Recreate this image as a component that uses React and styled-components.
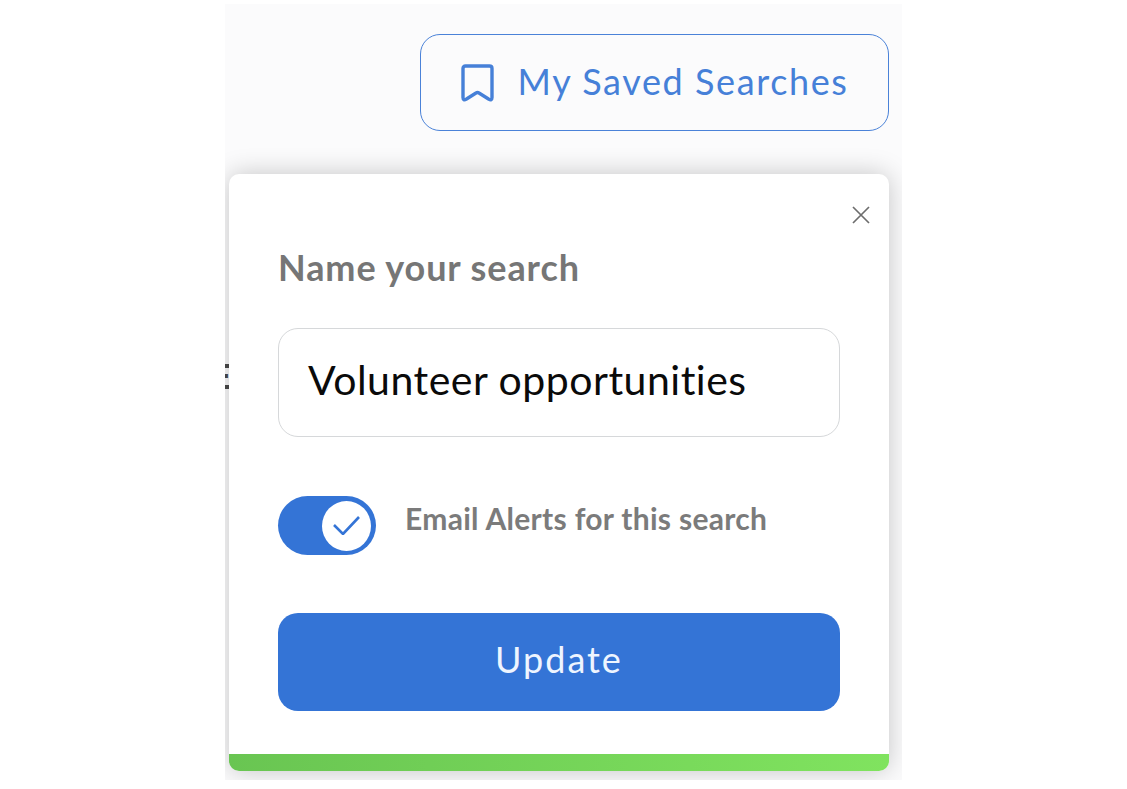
import styled, { createGlobalStyle } from "styled-components";

const GlobalStyle = createGlobalStyle`
  html, body {
    margin: 0;
    padding: 0;
    background: #ffffff;
  }
`;

const Page = styled.div`
  width: 1127px;
  height: 789px;
  overflow: hidden;
  font-family: "Lato", "Noto Sans", sans-serif;
  font-variant-ligatures: none;
`;

const Panel = styled.div`
  position: relative;
  display: flex;
  flex-direction: column;
  align-items: flex-end;
  box-sizing: border-box;
  width: 677px;
  height: 776px;
  margin: 4px 0 0 225px;
  padding: 30px 13px 0 4px;
  background: #fbfbfc;
  overflow: hidden;
`;

/* bit of the page behind the popup, cut off by the panel edge */
const BehindGlyph = styled.span`
  position: absolute;
  top: 355px;
  left: -13px;
  color: #4a4a4a;
  font-size: 34px;
  font-weight: 900;
  line-height: 1;
`;

const SavedButton = styled.button`
  display: flex;
  align-items: center;
  justify-content: center;
  gap: 24px;
  box-sizing: border-box;
  flex: none;
  width: 469px;
  height: 97px;
  border: 1.5px solid #4a82d8;
  border-radius: 20px;
  background: transparent;
  color: #4680d8;
  font-family: inherit;
  font-size: 36px;
  letter-spacing: 1.6px;
`;

const SavedLabel = styled.span`
  margin-bottom: 3px;
`;

const Card = styled.div`
  position: relative;
  display: flex;
  flex-direction: column;
  box-sizing: border-box;
  flex: none;
  width: 660px;
  height: 597px;
  margin-top: 43px;
  border-radius: 10px;
  background: #ffffff;
  box-shadow: 0 0 26px rgba(0, 0, 0, 0.22);
  overflow: hidden;
`;

const CardBody = styled.div`
  display: flex;
  flex-direction: column;
  flex: 1;
  padding: 0 49px;
`;

const CloseRow = styled.div`
  display: flex;
  justify-content: flex-end;
  height: 20px;
  margin: 31px -31px 0 0;
  color: #6d6d6d;
`;

const Title = styled.h2`
  margin: 19px 0 0;
  color: #767676;
  font-size: 36px;
  font-weight: 700;
  line-height: 46px;
  letter-spacing: 0.9px;
`;

const NameInput = styled.div`
  display: flex;
  align-items: center;
  box-sizing: border-box;
  height: 109px;
  margin-top: 38px;
  padding: 0 29px 6px;
  border: 1.5px solid #d6d8da;
  border-radius: 20px;
  color: #0a0a0a;
  font-size: 41px;
  letter-spacing: 0.5px;
`;

const AlertRow = styled.div`
  display: flex;
  align-items: center;
  gap: 29px;
  margin-top: 59px;
`;

const AlertLabel = styled.span`
  margin-bottom: 16px;
  color: #7b7b7b;
  font-size: 30px;
  font-weight: 700;
  letter-spacing: 0.3px;
`;

const Toggle = styled.div`
  display: flex;
  align-items: center;
  justify-content: flex-end;
  box-sizing: border-box;
  width: 98px;
  height: 59px;
  padding-right: 5px;
  border-radius: 30px;
  background: #3474d6;
`;

const Knob = styled.div`
  display: flex;
  align-items: center;
  justify-content: center;
  width: 49px;
  height: 50px;
  border-radius: 50%;
  background: #ffffff;
`;

const UpdateButton = styled.button`
  height: 98px;
  margin-top: 58px;
  padding-bottom: 7px;
  border: 0;
  border-radius: 20px;
  background: #3474d6;
  color: #eef5ff;
  font-family: inherit;
  font-size: 36px;
  letter-spacing: 2px;
`;

const GreenBar = styled.div`
  height: 17px;
  background: linear-gradient(90deg, #69c552, #80e35f);
`;

export default function App() {
  return (
    <Page>
      <GlobalStyle />
      <Panel>
        <BehindGlyph>E</BehindGlyph>
        <SavedButton>
          <svg width="33" height="38" viewBox="0 0 33 38" fill="none" stroke="#4680d8" strokeWidth="3.4" strokeLinejoin="round">
            <path d="M2 4.5Q2 2 4.5 2H28.5Q31 2 31 4.5V33.5Q31 37 27.5 35L18 29Q16.5 28 15 29L5.5 35Q2 37 2 33.5Z" />
          </svg>
          <SavedLabel>My Saved Searches</SavedLabel>
        </SavedButton>
        <Card>
          <CardBody>
            <CloseRow>
              <svg width="20" height="20" viewBox="0 0 20 20" stroke="currentColor" strokeWidth="1.7">
                <path d="M2 2L18 18M18 2L2 18" />
              </svg>
            </CloseRow>
            <Title>Name your search</Title>
            <NameInput>Volunteer opportunities</NameInput>
            <AlertRow>
              <Toggle>
                <Knob>
                  <svg width="27" height="19" viewBox="0 0 27 19" fill="none" stroke="#3474d6" strokeWidth="2.6">
                    <path d="M1 9L10 18L26 1" />
                  </svg>
                </Knob>
              </Toggle>
              <AlertLabel>Email Alerts for this search</AlertLabel>
            </AlertRow>
            <UpdateButton>Update</UpdateButton>
          </CardBody>
          <GreenBar />
        </Card>
      </Panel>
    </Page>
  );
}
